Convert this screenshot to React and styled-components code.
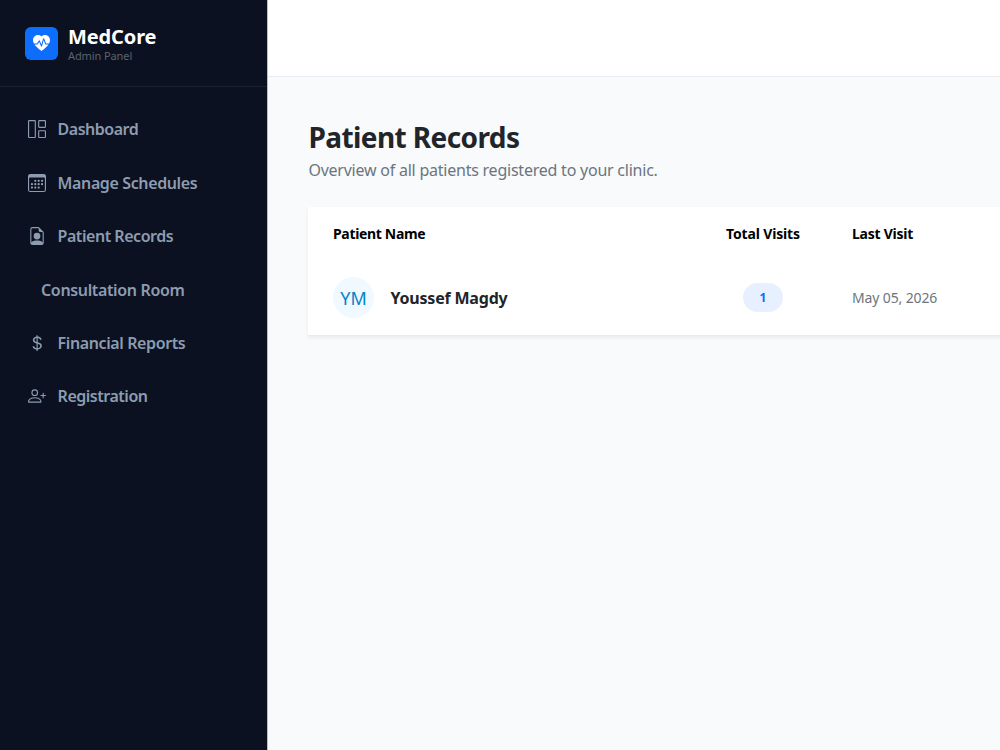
import React from "react";
import styled, { createGlobalStyle } from "styled-components";
import {
  BsHeartPulseFill,
  BsGrid1X2,
  BsCalendar3,
  BsFileEarmarkPerson,
  BsCurrencyDollar,
  BsPersonPlus,
} from "react-icons/bs";

const GlobalStyle = createGlobalStyle`
  * { box-sizing: border-box; }
  body {
    margin: 0;
    overflow: hidden;
    font-family: "Segoe UI", "Noto Sans", "Open Sans", sans-serif;
    background: #f8fafc;
    color: #212529;
  }
`;

const Shell = styled.div`
  display: flex;
  width: 100vw;
  height: 100vh;
  overflow: hidden;
`;

const Sidebar = styled.aside`
  flex: 0 0 268px;
  background: #0b1120;
  border-right: 1px solid #b9bfc9;
`;

const Brand = styled.div`
  display: flex;
  align-items: center;
  gap: 10px;
  height: 87px;
  padding: 0 0 0 25px;
  border-bottom: 1px solid #1b2130;
`;

const Logo = styled.div`
  display: flex;
  align-items: center;
  justify-content: center;
  width: 33px;
  height: 33px;
  border-radius: 6px;
  background: #0d6efd;
  color: #fff;
  font-size: 17px;
`;

const BrandText = styled.div`
  display: flex;
  flex-direction: column;
  padding-top: 4px;
`;

const Text = styled.span`
  white-space: nowrap;
  padding-top: ${(p) => p.$drop || 0}px;
  font-size: ${(p) => p.$size}px;
  line-height: ${(p) => p.$line}px;
  font-weight: ${(p) => p.$weight || 400};
  letter-spacing: ${(p) => p.$track || 0}px;
  color: ${(p) => p.$color || "inherit"};
`;

const Nav = styled.nav`
  display: flex;
  flex-direction: column;
  padding: 15.5px 12px 0;
`;

const NavItem = styled.a`
  display: flex;
  align-items: center;
  gap: 11.6px;
  height: 53.45px;
  padding-left: ${(p) => (p.$plain ? 29 : 16)}px;
  color: #8d9cb1;

  svg {
    flex: none;
    width: 18px;
    height: 18px;
  }
`;

const Main = styled.main`
  flex: 1;
  min-width: 0;
  overflow: hidden;
`;

const TopBar = styled.header`
  height: 77px;
  background: #fff;
  border-bottom: 1px solid #e8ebf2;
`;

const Content = styled.section`
  display: flex;
  flex-direction: column;
  width: 900px;
  padding: 41px 0 0 40.4px;
`;

const Card = styled.div`
  margin-top: 23px;
  height: 129px;
  background: #fff;
  border-bottom: 1px solid #e9ebee;
  box-shadow: 0 2px 4px rgba(0, 0, 0, 0.06);
`;

const Row = styled.div`
  display: grid;
  grid-template-columns: 380px 100px 200px;
  align-items: center;
  height: ${(p) => p.$height}px;
  padding-left: 24.6px;
`;

const VisitCell = styled.div`
  display: flex;
  justify-content: center;
`;

const DateCell = styled.div`
  display: flex;
  padding-left: 39px;
`;

const Person = styled.div`
  display: flex;
  align-items: center;
  gap: 16.5px;
`;

const Avatar = styled.div`
  display: flex;
  align-items: center;
  justify-content: center;
  width: 41px;
  height: 41px;
  border-radius: 50%;
  background: #f0f9ff;
`;

const Badge = styled.div`
  display: flex;
  align-items: center;
  justify-content: center;
  width: 40px;
  height: 29px;
  border-radius: 15px;
  background: #e7f0ff;
`;

const links = [
  { label: "Dashboard", icon: BsGrid1X2, track: -0.5 },
  { label: "Manage Schedules", icon: BsCalendar3, track: -0.38 },
  { label: "Patient Records", icon: BsFileEarmarkPerson, track: -0.46 },
  { label: "Consultation Room", track: -0.35 },
  { label: "Financial Reports", icon: BsCurrencyDollar, track: -0.39 },
  { label: "Registration", icon: BsPersonPlus, track: -0.48 },
];

export default function App() {
  return (
    <>
      <GlobalStyle />
      <Shell>
        <Sidebar>
          <Brand>
            <Logo><BsHeartPulseFill /></Logo>
            <BrandText>
              <Text $size={20} $line={22} $weight={700} $track={-0.12} $color="#fff">MedCore</Text>
              <Text $size={11} $line={16} $track={-0.1} $color="#5b626d">Admin Panel</Text>
            </BrandText>
          </Brand>
          <Nav>
            {links.map(({ label, icon: Icon, track }) => (
              <NavItem key={label} $plain={!Icon}>
                {Icon && <Icon />}
                <Text $size={16} $line={24} $weight={600} $track={track}>{label}</Text>
              </NavItem>
            ))}
          </Nav>
        </Sidebar>
        <Main>
          <TopBar />
          <Content>
            <Text $size={28} $line={38} $weight={700} $track={-0.58}>Patient Records</Text>
            <Text $size={16} $line={28} $track={-0.23} $color="#6c757d">Overview of all patients registered to your clinic.</Text>
            <Card>
              <Row $height={54}>
                <Text $size={14} $line={20} $weight={700} $track={-0.33} $color="#000">Patient Name</Text>
                <VisitCell>
                  <Text $size={14} $line={20} $weight={700} $track={-0.16} $color="#000">Total Visits</Text>
                </VisitCell>
                <DateCell>
                  <Text $size={14} $line={20} $weight={700} $track={-0.25} $color="#000">Last Visit</Text>
                </DateCell>
              </Row>
              <Row $height={73}>
                <Person>
                  <Avatar><Text $size={18} $line={24} $color="#0284c7">YM</Text></Avatar>
                  <Text $size={16} $line={24} $drop={1} $weight={700} $track={-0.2}>Youssef Magdy</Text>
                </Person>
                <VisitCell>
                  <Badge><Text $size={12} $line={16} $drop={1} $weight={700} $color="#0d6efd">1</Text></Badge>
                </VisitCell>
                <DateCell>
                  <Text $size={14} $line={20} $track={-0.13} $color="#6c757d">May 05, 2026</Text>
                </DateCell>
              </Row>
            </Card>
          </Content>
        </Main>
      </Shell>
    </>
  );
}
